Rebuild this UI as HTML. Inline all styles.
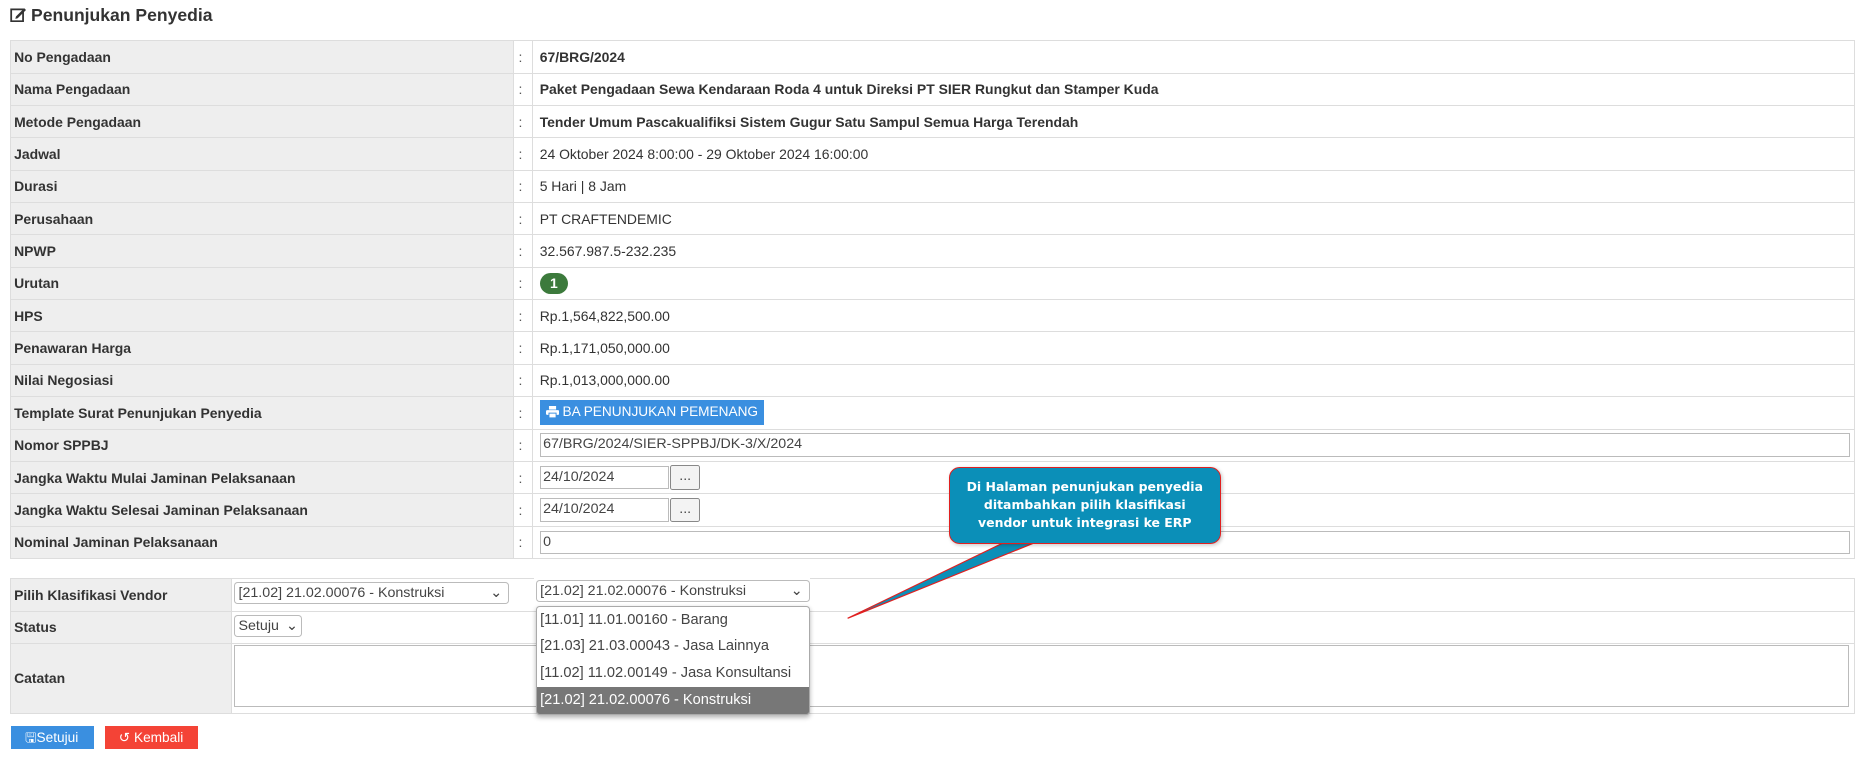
<!DOCTYPE html>
<html><head><meta charset="utf-8"><style>
html,body{margin:0;padding:0;background:#fff;overflow:hidden}
body{zoom:1.1875;width:1568px;height:637px;position:relative;font-family:"Liberation Sans",Arial,sans-serif;font-size:11.75px;color:#333}
.title{position:absolute;left:8px;top:4px;font-size:14.8px;font-weight:bold;color:#333}
table{border-collapse:collapse;position:absolute;left:8px;width:1554px}
td{border:1px solid #ddd;padding:0 3px;height:26.4px;vertical-align:middle}
td.l{background:#eee;font-weight:bold;width:418px}
td.c{width:8px;padding-left:4px;color:#555}
td.v{padding-left:6px}
.b{font-weight:bold}
.inp{border:1px solid #bbb;height:18px;line-height:18px;padding:0 2px;font-size:12px;color:#444;box-sizing:content-box;background:#fff}
.btn{display:inline-block;background:#3a8fe0;color:#fff;font-size:11.5px;padding:0 5px;height:21px;line-height:21px}
.badge{display:inline-block;background:#3c7a3c;color:#fff;font-weight:bold;border-radius:9px;width:24px;height:18px;line-height:18px;text-align:center}
.sel{border:1px solid #bbb;border-radius:3px;height:17px;line-height:17px;font-size:12px;color:#444;padding:0 3px;position:absolute;background:#fff}
.dd{position:absolute;left:451px;top:510px;width:229px;border:1px solid #aaa;border-radius:3px;background:#fff;box-shadow:0 2px 4px rgba(0,0,0,.3);overflow:hidden}
.dd div{height:22.5px;line-height:22.5px;padding-left:3px;font-size:12.3px;color:#444}
.dd .hl{background:#777;color:#fff}
.call{position:absolute;left:799px;top:393px;width:229px;height:65px;background:#0b8fb8;border:1px solid #e02020;border-radius:9px;color:#fff;font-family:"DejaVu Sans",sans-serif;font-weight:bold;font-size:10.5px;text-align:center;line-height:15px;box-sizing:border-box;padding-top:9px;box-shadow:1px 1px 3px rgba(0,0,0,.2)}
</style></head><body>
<div class="title"><svg width="14" height="13" viewBox="0 0 14 13" style="vertical-align:-1px"><rect x="1" y="2" width="10" height="10" fill="none" stroke="#333" stroke-width="1.5"/><path d="M5 8 L12 1 L13.5 2.5 L6.5 9.5 L4.5 10 Z" fill="#333"/></svg> Penunjukan Penyedia</div>
<table style="top:34px">
<tr><td class="l">No Pengadaan</td><td class="c">:</td><td class="v b">67/BRG/2024</td></tr>
<tr><td class="l">Nama Pengadaan</td><td class="c">:</td><td class="v b">Paket Pengadaan Sewa Kendaraan Roda 4 untuk Direksi PT SIER Rungkut dan Stamper Kuda</td></tr>
<tr><td class="l">Metode Pengadaan</td><td class="c">:</td><td class="v b">Tender Umum Pascakualifiksi Sistem Gugur Satu Sampul Semua Harga Terendah</td></tr>
<tr><td class="l">Jadwal</td><td class="c">:</td><td class="v">24 Oktober 2024 8:00:00 - 29 Oktober 2024 16:00:00</td></tr>
<tr><td class="l">Durasi</td><td class="c">:</td><td class="v">5 Hari | 8 Jam</td></tr>
<tr><td class="l">Perusahaan</td><td class="c">:</td><td class="v">PT CRAFTENDEMIC</td></tr>
<tr><td class="l">NPWP</td><td class="c">:</td><td class="v">32.567.987.5-232.235</td></tr>
<tr><td class="l">Urutan</td><td class="c">:</td><td class="v"><span class="badge">1</span></td></tr>
<tr><td class="l">HPS</td><td class="c">:</td><td class="v">Rp.1,564,822,500.00</td></tr>
<tr><td class="l">Penawaran Harga</td><td class="c">:</td><td class="v">Rp.1,171,050,000.00</td></tr>
<tr><td class="l">Nilai Negosiasi</td><td class="c">:</td><td class="v">Rp.1,013,000,000.00</td></tr>
<tr><td class="l">Template Surat Penunjukan Penyedia</td><td class="c">:</td><td class="v"><span class="btn"><svg width="11" height="10" viewBox="0 0 11 10" style="vertical-align:-1px"><rect x="2.5" y="0" width="6" height="3" fill="#fff"/><rect x="0" y="3.5" width="11" height="4" rx="1" fill="#fff"/><rect x="2.5" y="6" width="6" height="4" fill="#fff" stroke="#3a8fe0" stroke-width=".8"/></svg> BA PENUNJUKAN PEMENANG</span></td></tr>
<tr><td class="l">Nomor SPPBJ</td><td class="c">:</td><td class="v"><div class="inp" style="width:1098px">67/BRG/2024/SIER-SPPBJ/DK-3/X/2024</div></td></tr>
<tr><td class="l">Jangka Waktu Mulai Jaminan Pelaksanaan</td><td class="c">:</td><td class="v"><div class="inp" style="width:103px;display:inline-block;vertical-align:middle">24/10/2024</div><span class="inp" style="display:inline-block;vertical-align:middle;width:20px;text-align:center;background:#f3f3f3;border-radius:2px;margin-left:1px;height:19px;border-color:#888">...</span></td></tr>
<tr><td class="l">Jangka Waktu Selesai Jaminan Pelaksanaan</td><td class="c">:</td><td class="v"><div class="inp" style="width:103px;display:inline-block;vertical-align:middle">24/10/2024</div><span class="inp" style="display:inline-block;vertical-align:middle;width:20px;text-align:center;background:#f3f3f3;border-radius:2px;margin-left:1px;height:19px;border-color:#888">...</span></td></tr>
<tr><td class="l">Nominal Jaminan Pelaksanaan</td><td class="c">:</td><td class="v"><div class="inp" style="width:1098px">0</div></td></tr>
</table>
<table style="top:487px">
<tr><td class="l" style="width:180px;height:25px">Pilih Klasifikasi Vendor</td><td></td></tr>
<tr><td class="l" style="width:180px;height:25px">Status</td><td></td></tr>
<tr><td class="l" style="width:180px;height:58px">Catatan</td><td></td></tr>
</table>
<div class="sel" style="left:197px;top:490px;width:224px">[21.02] 21.02.00076 - Konstruksi<span style="position:absolute;right:5px">&#8964;</span></div>
<div class="sel" style="left:197px;top:518px;width:50px">Setuju<span style="position:absolute;right:3px">&#8964;</span></div>
<div style="position:absolute;left:450px;top:485px;width:232px;height:24px;background:#fff"></div>
<div class="sel" style="left:451px;top:488px;width:223px">[21.02] 21.02.00076 - Konstruksi<span style="position:absolute;right:5px">&#8964;</span></div>
<div class="inp" style="position:absolute;left:197px;top:543px;width:1354px;height:51px;border-color:#bbb"></div>
<div class="dd"><div>[11.01] 11.01.00160 - Barang</div><div>[21.03] 21.03.00043 - Jasa Lainnya</div><div>[11.02] 11.02.00149 - Jasa Konsultansi</div><div class="hl">[21.02] 21.02.00076 - Konstruksi</div></div>
<svg style="position:absolute;left:700px;top:450px" width="200" height="80"><polygon points="144,8 170,8 14,71" fill="#0b8fb8" stroke="#e02020" stroke-width="1"/></svg>
<div class="call">Di Halaman penunjukan penyedia<br>ditambahkan pilih klasifikasi<br>vendor untuk integrasi ke ERP</div>
<div class="btn" style="position:absolute;left:9px;top:611px;height:20px;line-height:20px;padding:0 13px 0 12px">&#128427;Setujui</div>
<div class="btn" style="position:absolute;left:88px;top:611px;height:20px;line-height:20px;padding:0 12px;background:#f44336">&#8634; Kembali</div>
</body></html>
